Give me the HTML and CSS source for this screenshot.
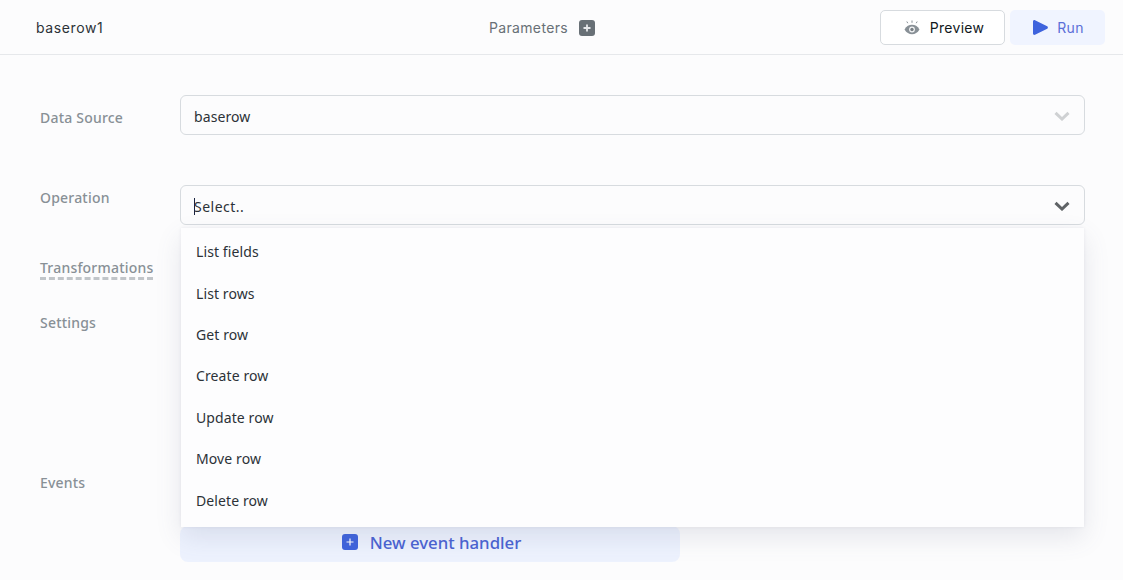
FILE: index.html
```html
<!DOCTYPE html>
<html lang="en">
<head>
<meta charset="utf-8">
<title>baserow1</title>
<link rel="stylesheet" href="styles.css">
</head>
<body>
<header class="topbar">
  <div class="query-name">baserow1</div>
  <div class="params">
    <span>Parameters</span>
    <svg class="params-icon" width="16" height="16" viewBox="0 0 16 16"><rect width="16" height="16" rx="3" fill="#687076"/><path d="M8 4.500v7M4.500 8h7" stroke="#e6e8eb" stroke-width="1.800"/></svg>
  </div>
  <div class="actions">
    <button class="btn btn-preview">
      <svg width="16" height="15" viewBox="0 0 16 15"><path d="M.5 9.500C2.500 6 5 4.800 8 4.800s5.500 1.200 7.500 4.700c-2 3.300-4.500 4.700-7.500 4.700s-5.500-1.400-7.500-4.700z" fill="#889096"/><circle cx="8" cy="9.500" r="2.900" fill="#f4f5f6"/><circle cx="8" cy="9.500" r="1.700" fill="#787f85"/><path d="M8 .5v2.300M2.800 1.500l1 1.700M13.200 1.500l-1 1.700" stroke="#889096" stroke-width="1"/></svg>
      <span>Preview</span>
    </button>
    <button class="btn btn-run">
      <svg width="15" height="15" viewBox="0 0 15 15"><path d="M0 1.500C0 .4 1-.3 2 .2l12.200 6c.9.500.9 2 0 2.600L2 14.800c-1 .5-2-.2-2-1.300z" fill="#3e63dd"/></svg>
      <span>Run</span>
    </button>
  </div>
</header>
<main class="form">
  <div class="row row-source">
    <label class="label label-source">Data Source</label>
    <div class="select">
      <span class="value">baserow</span>
      <svg class="chev" width="16" height="10" viewBox="0 0 16 10"><path d="M1.500 1.800L8 8l6.500-6.200" fill="none" stroke="#cfd1d3" stroke-width="3"/></svg>
    </div>
  </div>
  <div class="row row-op">
    <label class="label label-op">Operation</label>
    <div class="select-wrap">
      <div class="select">
        <span class="caret"></span>
        <span class="value value-select">Select..</span>
        <svg class="chev" width="16" height="10" viewBox="0 0 16 10"><path d="M1.500 1.800L8 8l6.500-6.200" fill="none" stroke="#5f6366" stroke-width="3"/></svg>
      </div>
      <ul class="menu">
        <li>List fields</li>
        <li>List rows</li>
        <li>Get row</li>
        <li>Create row</li>
        <li>Update row</li>
        <li>Move row</li>
        <li>Delete row</li>
      </ul>
    </div>
  </div>
  <div class="row row-trans"><span class="label label-dashed">Transformations</span></div>
  <div class="row row-settings"><span class="label">Settings</span></div>
  <div class="row row-events">
    <span class="label">Events</span>
    <div class="events-body">
      <button class="new-handler">
        <svg width="16" height="16" viewBox="0 0 16 16"><rect width="16" height="16" rx="3" fill="#3e63dd"/><path d="M8 4.500v7M4.500 8h7" stroke="#fff" stroke-width="1.200"/></svg>
        <span>New event handler</span>
      </button>
    </div>
  </div>
</main>
</body>
</html>
```

FILE: styles.css
```css
* { box-sizing: border-box; }
html, body { margin: 0; height: 100%; overflow: hidden; }
body {
  background: #fcfcfd;
  font-family: "Noto Sans", "Liberation Sans", sans-serif;
  color: #2c3238;
}
.topbar {
  height: 55px;
  border-bottom: 1px solid #e6e8eb;
  display: grid;
  grid-template-columns: 1fr auto 1fr;
  align-items: center;
  padding: 0 18px 0 36px;
}
.query-name {
  font-family: Inter, sans-serif;
  font-size: 14px;
  letter-spacing: .6px;
  color: #2c3238;
}
.params {
  display: flex;
  align-items: center;
  gap: 11px;
  font-family: Inter, sans-serif;
  font-size: 14px;
  letter-spacing: .35px;
  color: #687076;
  margin-right: 57px;
}
.params-icon { flex: none; margin-top: 1px; }
.actions { display: flex; justify-content: flex-end; gap: 5px; }
.btn {
  height: 35px;
  border-radius: 5px;
  display: flex;
  align-items: center;
  justify-content: center;
  font-family: Inter, sans-serif;
  font-size: 14px;
  letter-spacing: .3px;
  cursor: pointer;
}
.btn-preview {
  width: 125px;
  gap: 10px;
  background: #fff;
  border: 1px solid #d7dbdf;
  color: #11181c;
  padding-right: 3px;
}
.btn-run {
  width: 95px;
  gap: 9px;
  background: #f0f4ff;
  border: 0;
  color: #5b6fd8;
  padding-right: 4px;
}
.form { padding: 40px 38px 0 40px; }
.row { display: flex; align-items: flex-start; }
.label {
  width: 140px;
  flex: none;
  font-size: 14px;
  font-weight: 500;
  letter-spacing: .2px;
  line-height: 20px;
  color: #889096;
}
.row-source { height: 40px; }
.label-source { margin-top: 13px; }
.row-source .select { flex: 1; }
.row-op { height: 40px; margin-top: 50px; }
.label-op { margin-top: 3px; }
.select-wrap { position: relative; flex: 1; }
.select {
  height: 40px;
  border: 1px solid #d7dbdf;
  border-radius: 6px;
  display: flex;
  align-items: center;
  padding: 0 14px 0 13px;
  position: relative;
}
.value { flex: 1; font-size: 14px; letter-spacing: .1px; color: #2c3238; margin-top: 2px; }
.value-select { letter-spacing: .5px; }
.caret {
  position: absolute;
  left: 13px;
  top: 12px;
  width: 1px;
  height: 17px;
  background: #1a2440;
}
.chev { flex: none; margin-top: 2px; }
.menu {
  position: absolute;
  left: 1px;
  right: 1px;
  top: 43px;
  height: 299px;
  margin: 0;
  padding: 3.100px 0 0;
  list-style: none;
  background: #fdfdfe;
  box-shadow: 0 10px 24px rgba(90, 100, 130, .14), 0 0 3px rgba(90, 100, 130, .1);
  z-index: 2;
}
.menu li {
  height: 41.450px;
  line-height: 41px;
  padding-left: 15px;
  font-size: 14px;
  letter-spacing: .1px;
  color: #2c3238;
}
.row-trans { margin-top: 34px; }
.label-dashed { width: auto; border-bottom: 3px dashed #c1c5c9; line-height: 18px; }
.row-settings { margin-top: 33px; }
.row-events { margin-top: 140px; }
.events-body { flex: 1; padding-top: 53px; }
.new-handler {
  width: 500px;
  height: 36px;
  border: 0;
  border-radius: 8px;
  background: #edf2fe;
  display: flex;
  align-items: center;
  justify-content: center;
  gap: 12px;
  font-family: "Noto Sans", sans-serif;
  font-size: 16.800px;
  font-weight: 500;
  color: #4a63d3;
  padding: 0 0 4px 3px;
}
```
